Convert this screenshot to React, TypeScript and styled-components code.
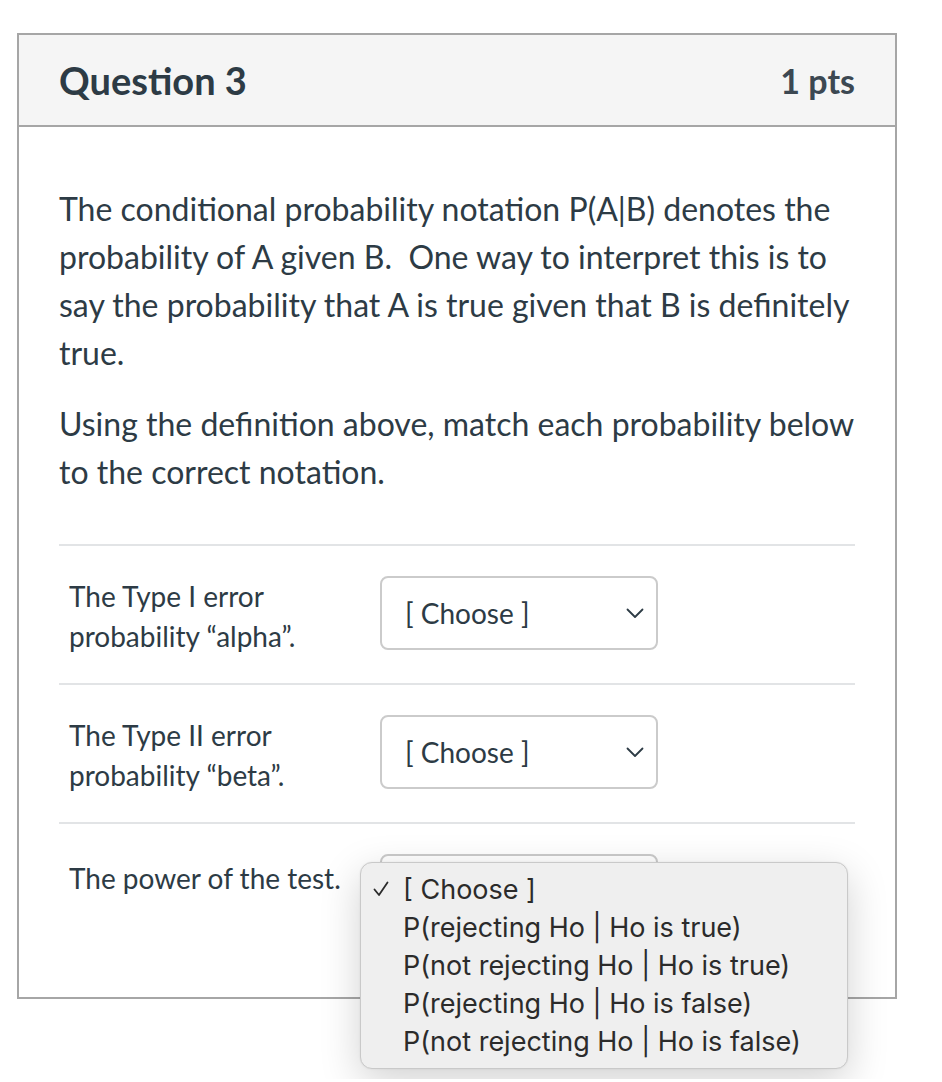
import React from "react";
import styled, { createGlobalStyle } from "styled-components";

const GlobalStyle = createGlobalStyle`
  html, body {
    margin: 0;
    padding: 0;
    background: #ffffff;
  }
  body {
    font-family: Lato, "Helvetica Neue", Arial, sans-serif;
    color: #2d3b45;
  }
`;

const Page = styled.div`
  padding: 33px 0 80px 17px;
`;

const Card = styled.div`
  width: 876px;
  border: 2px solid #a6a6a6;
  background: #ffffff;
`;

const Header = styled.div`
  height: 90px;
  display: flex;
  align-items: center;
  justify-content: space-between;
  padding: 0 40px 0 40px;
  background: #f5f5f5;
  border-bottom: 2px solid #a6a6a6;
`;

const Title = styled.h2`
  margin: 0;
  font-size: 38px;
  font-weight: 700;
  color: #2d3b45;
`;

const Points = styled.div`
  font-size: 34px;
  font-weight: 700;
  color: #3c4852;
`;

const Body = styled.div`
  padding: 58px 40px 42px 40px;
`;

const Paragraph = styled.p`
  margin: 0 0 23px 0;
  font-size: 32px;
  line-height: 48px;
`;

const Matches = styled.div`
  margin-top: 48px;
`;

const Row = styled.div`
  display: flex;
  align-items: flex-start;
  padding: 30px 0 27px 0;
  border-top: 2px solid #e2e4e6;
`;

const Label = styled.div<{ $offset?: number }>`
  width: 311px;
  padding: ${(p) => p.$offset ?? 0}px 0 0 10px;
  font-size: 28px;
  line-height: 40px;
`;

const SelectWrap = styled.div`
  position: relative;
`;

const Select = styled.div<{ $covered?: boolean }>`
  display: flex;
  align-items: center;
  justify-content: space-between;
  padding: 0 12px 0 23px;
  border: 2px solid #cbcbcb;
  border-radius: 8px;
  box-sizing: border-box;
  width: 278px;
  height: 74px;
  font-size: 28px;
  color: #2d3b45;

  & > * {
    visibility: ${(p) => (p.$covered ? "hidden" : "visible")};
  }
`;

const Menu = styled.div`
  position: absolute;
  left: -20px;
  top: 8px;
  width: 488px;
  box-sizing: border-box;
  padding: 7px 0 8px 0;
  background: #efefef;
  border: 1px solid #c9c9c9;
  border-radius: 12px;
  box-shadow: 0 12px 40px rgba(0, 0, 0, 0.18), 0 0 2px rgba(0, 0, 0, 0.08);
  font-family: Inter, "Noto Sans", sans-serif;
  font-size: 27px;
  color: #2b2b2b;
  z-index: 10;
`;

const MenuItem = styled.div`
  display: flex;
  align-items: center;
  height: 38px;
  padding-left: 12px;
`;

const Check = styled.span`
  width: 30px;
  display: inline-flex;
  align-items: center;
`;

const Chevron = () => (
  <svg width="18" height="11" viewBox="0 0 18 11" fill="none">
    <path d="M1.5 1.5 L9 9 L16.5 1.5" stroke="#2d3b45" strokeWidth="1.8" strokeLinecap="round" strokeLinejoin="round" />
  </svg>
);

const CheckMark = () => (
  <svg width="16" height="16" viewBox="0 0 16 16" fill="none">
    <path d="M1.5 8.5 L6 14 L14.5 1.5" stroke="#2b2b2b" strokeWidth="1.8" strokeLinecap="round" strokeLinejoin="round" />
  </svg>
);

const options = [
  "[ Choose ]",
  "P(rejecting Ho | Ho is true)",
  "P(not rejecting Ho | Ho is true)",
  "P(rejecting Ho | Ho is false)",
  "P(not rejecting Ho | Ho is false)",
];

const rows = [
  { label: ["The Type I error", "probability \u201calpha\u201d."], open: false },
  { label: ["The Type II error", "probability \u201cbeta\u201d."], open: false },
  { label: ["The power of the test."], open: true },
];

export default function App() {
  return (
    <>
      <GlobalStyle />
      <Page>
        <Card>
          <Header>
            <Title>Question 3</Title>
            <Points>1 pts</Points>
          </Header>
          <Body>
            <Paragraph>
              The conditional probability notation P(A|B) denotes the probability of A given B.&nbsp; One way to
              interpret this is to say the probability that A is true given that B is definitely true.
            </Paragraph>
            <Paragraph>
              Using the definition above, match each probability below to the correct notation.
            </Paragraph>
            <Matches>
              {rows.map((row, i) => (
                <Row key={i}>
                  <Label $offset={row.label.length === 1 ? 4 : 0}>
                    {row.label.map((l, j) => (
                      <div key={j}>{l}</div>
                    ))}
                  </Label>
                  <SelectWrap>
                    <Select $covered={row.open}>
                      <span>[ Choose ]</span>
                      <Chevron />
                    </Select>
                    {row.open && (
                      <Menu>
                        {options.map((o, k) => (
                          <MenuItem key={k}>
                            <Check>{k === 0 && <CheckMark />}</Check>
                            {o}
                          </MenuItem>
                        ))}
                      </Menu>
                    )}
                  </SelectWrap>
                </Row>
              ))}
            </Matches>
          </Body>
        </Card>
      </Page>
    </>
  );
}
